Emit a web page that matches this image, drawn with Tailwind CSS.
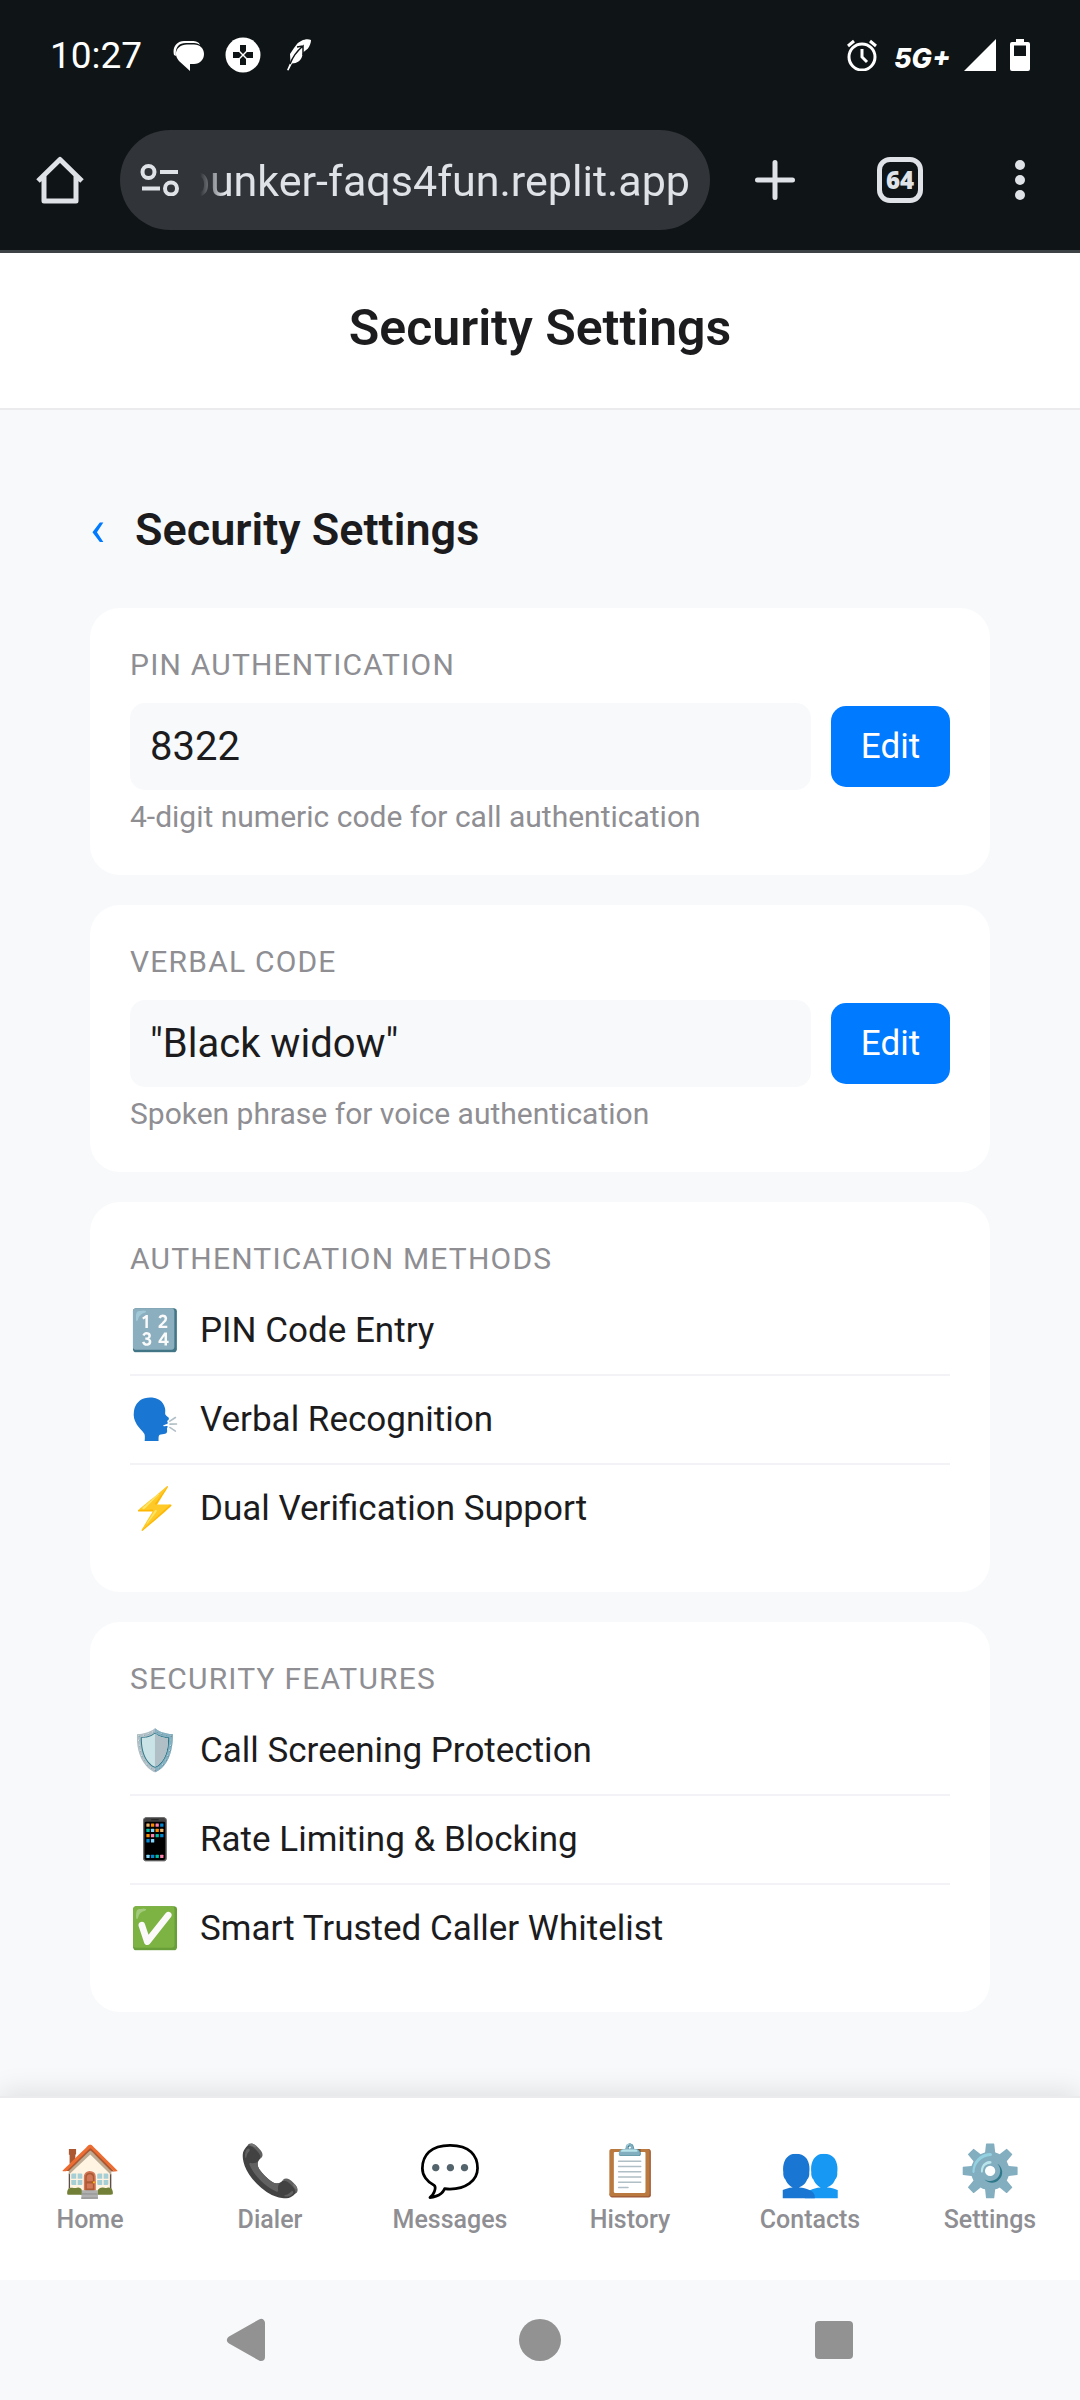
<!DOCTYPE html>
<html lang="en">
<head>
<meta charset="utf-8">
<meta name="viewport" content="width=device-width, initial-scale=1">
<title>Security Settings</title>
<script src="https://cdn.jsdelivr.net/npm/@tailwindcss/browser@4"></script>
</head>
<body class="flex min-h-screen flex-col bg-[#f8f9fb] font-[Roboto,sans-serif] text-[#1c1c1e]">

<!-- Phone status bar -->
<div class="flex h-[110px] items-center justify-between bg-[#0f1416] pr-[50px] pl-[50px] text-white">
  <div class="flex items-center">
    <span class="w-[123px] pt-[2px] text-[37px] leading-[46px]">10:27</span>
    <svg class="h-8 w-8" viewBox="0 0 32 32" fill="#fff"><path d="M1 16C-1 8 4 2 11 2h8c4 0 7 1 8 4-3-2-5-2-8-2h-6C5 4 2 9 3 17z"/><path d="M14 5.500h7c6 0 10 4 10 9.500s-4 10-10 10h-4v7L6 22C-1 14 5 5.500 14 5.500z"/></svg>
    <svg class="ml-5 h-9 w-9" viewBox="0 0 36 36"><circle cx="18" cy="18" r="17.500" fill="#fff"/><path d="M15 8h6v6l-3 3-3-3zM15 28h6v-6l-3-3-3 3zM8 15h6l3 3-3 3H8zM28 15h-6l-3 3 3 3h6z" fill="#0f1416"/></svg>
    <svg class="ml-6 h-8 w-7" viewBox="0 0 28 32"><path d="M26 1c-5-2-11 1-14 4l-3 4-4 6 .5 8L2 31l1.500.5 3.500-7c5 0 9-3 10-7l1-4 5-4c2-3 3-6 3-8.500z" fill="#fff"/><path d="M5 25C8 17 12 12 18 7v9M18 7l-6 1" fill="none" stroke="#0f1416" stroke-width="1.500"/></svg>
  </div>
  <div class="flex items-center">
    <svg class="h-8 w-8" viewBox="0 0 32 32" fill="none" stroke="#fff" stroke-width="3"><circle cx="16" cy="18" r="13"/><path d="M16 10v8l5 5M2 7l6-5M30 7l-6-5"/></svg>
    <span class="ml-4 w-[70px] pt-2 font-[Inter,sans-serif] text-[27px] leading-[32px] font-extrabold italic">5G+</span>
    <svg class="h-8 w-8" viewBox="0 0 32 32" fill="#fff"><path d="M32 0v32H0z"/></svg>
    <svg class="ml-[14px] h-8 w-5" viewBox="0 0 20 32"><path d="M6 0h8v3h4q2 0 2 2v25q0 2-2 2H2q-2 0-2-2V5q0-2 2-2h4z" fill="#fff"/><path d="M4 6.500h12V17H4z" fill="#0f1416"/></svg>
  </div>
</div>

<!-- Browser toolbar -->
<div class="flex h-[143px] items-center border-b-3 border-[#3c4246] bg-[#0f1416] text-[#dfe2e7]">
  <button type="button" aria-label="Home page" class="flex w-[120px] justify-center">
    <svg class="h-12 w-12" viewBox="0 0 48 48" fill="none" stroke="currentColor" stroke-width="5" stroke-linejoin="round"><path d="M2 25 24 3.500 46 25M8 20v25h32V20"/></svg>
  </button>
  <div class="flex h-[100px] min-w-0 flex-1 items-center rounded-full bg-[#313438] pr-5 pl-5">
    <svg class="h-8 w-10 shrink-0" viewBox="0 0 40 32" fill="none" stroke="currentColor" stroke-width="4"><circle cx="8.500" cy="8" r="6"/><circle cx="31" cy="24.500" r="6"/><path d="M20 8h18M2 24.500h18"/></svg>
    <input type="text" dir="rtl" aria-label="Address" value="bunker-faqs4fun.replit.app" class="ml-5 min-w-0 flex-1 bg-transparent pt-[2px] text-[43px] leading-[52px] outline-none [mask-image:linear-gradient(to_right,transparent,black_24px)]">
  </div>
  <button type="button" aria-label="New tab" class="flex w-[130px] justify-center">
    <svg class="h-10 w-10" viewBox="0 0 40 40" stroke="currentColor" stroke-width="5" stroke-linecap="round"><path d="M20 2.500v35M2.500 20h35"/></svg>
  </button>
  <button type="button" aria-label="Tabs" class="flex w-[120px] justify-center">
    <span class="flex h-[46px] w-[46px] items-center justify-center rounded-[13px] border-5 border-current font-['Open_Sans',sans-serif] text-[24px] leading-[24px] font-extrabold">64</span>
  </button>
  <button type="button" aria-label="More options" class="flex w-[120px] justify-center">
    <svg class="h-10 w-10" viewBox="0 0 40 40" fill="currentColor"><circle cx="20" cy="5" r="5"/><circle cx="20" cy="20" r="5"/><circle cx="20" cy="35" r="5"/></svg>
  </button>
</div>

<header class="border-b-2 border-[#ebebed] bg-white pt-[46px] pb-[51px]">
  <h1 class="text-center text-[50px] leading-[58px] font-semibold">Security Settings</h1>
</header>

<main class="flex flex-1 flex-col px-[90px] pt-[90px] pb-[84px]">
  <div class="mb-[50px] flex h-[58px] items-center gap-[30px]">
    <button type="button" aria-label="Back" class="text-[50px] leading-[58px] text-[#007aff]">‹</button>
    <h2 class="text-[45px] leading-[53px] font-semibold">Security Settings</h2>
  </div>

  <div class="flex flex-col gap-[30px]">
    <section class="rounded-[30px] bg-white p-10">
      <label for="pin" class="block text-[30px] leading-[33px] tracking-[0.04em] text-[#8e8e93]">PIN AUTHENTICATION</label>
      <div class="mt-[22px] flex items-center gap-5">
        <input id="pin" type="text" readonly value="8322" class="h-[87px] min-w-0 flex-1 rounded-[15px] bg-[#f8f9fb] px-5 text-[40px] leading-[47px]">
        <button type="button" class="h-[81px] w-[119px] rounded-[15px] bg-[#007aff] text-[35px] leading-[41px] text-white">Edit</button>
      </div>
      <p class="mt-[10px] mb-[2px] text-[30px] leading-[33px] text-[#8e8e93]">4-digit numeric code for call authentication</p>
    </section>

    <section class="rounded-[30px] bg-white p-10">
      <label for="verbal" class="block text-[30px] leading-[33px] tracking-[0.04em] text-[#8e8e93]">VERBAL CODE</label>
      <div class="mt-[22px] flex items-center gap-5">
        <input id="verbal" type="text" readonly value="&quot;Black widow&quot;" class="h-[87px] min-w-0 flex-1 rounded-[15px] bg-[#f8f9fb] px-5 text-[40px] leading-[47px]">
        <button type="button" class="h-[81px] w-[119px] rounded-[15px] bg-[#007aff] text-[35px] leading-[41px] text-white">Edit</button>
      </div>
      <p class="mt-[10px] mb-[2px] text-[30px] leading-[33px] text-[#8e8e93]">Spoken phrase for voice authentication</p>
    </section>

    <section class="rounded-[30px] bg-white p-10">
      <h3 class="mb-3 text-[30px] leading-[33px] tracking-[0.04em] text-[#8e8e93]">AUTHENTICATION METHODS</h3>
      <ul class="divide-y-2 divide-[#f2f2f7] text-[35px] leading-[47px]">
        <li class="flex items-center gap-5 py-5"><span class="w-[50px] text-[40px]">🔢</span>PIN Code Entry</li>
        <li class="flex items-center gap-5 py-5"><span class="w-[50px] text-[40px]">🗣️</span>Verbal Recognition</li>
        <li class="flex items-center gap-5 py-5"><span class="w-[50px] text-[40px]">⚡</span>Dual Verification Support</li>
      </ul>
    </section>

    <section class="rounded-[30px] bg-white p-10">
      <h3 class="mb-3 text-[30px] leading-[33px] tracking-[0.04em] text-[#8e8e93]">SECURITY FEATURES</h3>
      <ul class="divide-y-2 divide-[#f2f2f7] text-[35px] leading-[47px]">
        <li class="flex items-center gap-5 py-5"><span class="w-[50px] text-[40px]">🛡️</span>Call Screening Protection</li>
        <li class="flex items-center gap-5 py-5"><span class="w-[50px] text-[40px]">📱</span>Rate Limiting &amp; Blocking</li>
        <li class="flex items-center gap-5 py-5"><span class="w-[50px] text-[40px]">✅</span>Smart Trusted Caller Whitelist</li>
      </ul>
    </section>
  </div>
</main>

<nav class="grid grid-cols-6 border-t-2 border-[#ebebed] bg-white pt-[44px] pb-[45px] text-[25px] leading-[30px] font-medium text-[#8e8e93] shadow-[0_-5px_25px_rgba(0,0,0,0.1)]">
  <a href="#home" class="flex flex-col items-center gap-[5px]"><span class="text-[50px] leading-[58px]">🏠</span>Home</a>
  <a href="#dialer" class="flex flex-col items-center gap-[5px]"><span class="text-[50px] leading-[58px]">📞</span>Dialer</a>
  <a href="#messages" class="flex flex-col items-center gap-[5px]"><span class="text-[50px] leading-[58px]">💬</span>Messages</a>
  <a href="#history" class="flex flex-col items-center gap-[5px]"><span class="text-[50px] leading-[58px]">📋</span>History</a>
  <a href="#contacts" class="flex flex-col items-center gap-[5px]"><span class="text-[50px] leading-[58px]">👥</span>Contacts</a>
  <a href="#settings" class="flex flex-col items-center gap-[5px]"><span class="text-[50px] leading-[58px]">⚙️</span>Settings</a>
</nav>

<!-- System navigation -->
<div class="z-10 flex h-[120px] items-center justify-center gap-[250px] bg-[#f8f9fb] text-[#929292]">
  <button type="button" aria-label="System back"><svg class="h-[44px] w-[44px]" viewBox="0 0 44 44" fill="currentColor" stroke="currentColor" stroke-width="8" stroke-linejoin="round"><path d="M37 5v34L7 22z"/></svg></button>
  <button type="button" aria-label="System home"><svg class="h-[44px] w-[44px]" viewBox="0 0 44 44" fill="currentColor"><circle cx="22" cy="22" r="21"/></svg></button>
  <button type="button" aria-label="Recent apps"><svg class="h-[44px] w-[44px]" viewBox="0 0 44 44" fill="currentColor"><rect x="3" y="3" width="38" height="38" rx="4"/></svg></button>
</div>
</body>
</html>
